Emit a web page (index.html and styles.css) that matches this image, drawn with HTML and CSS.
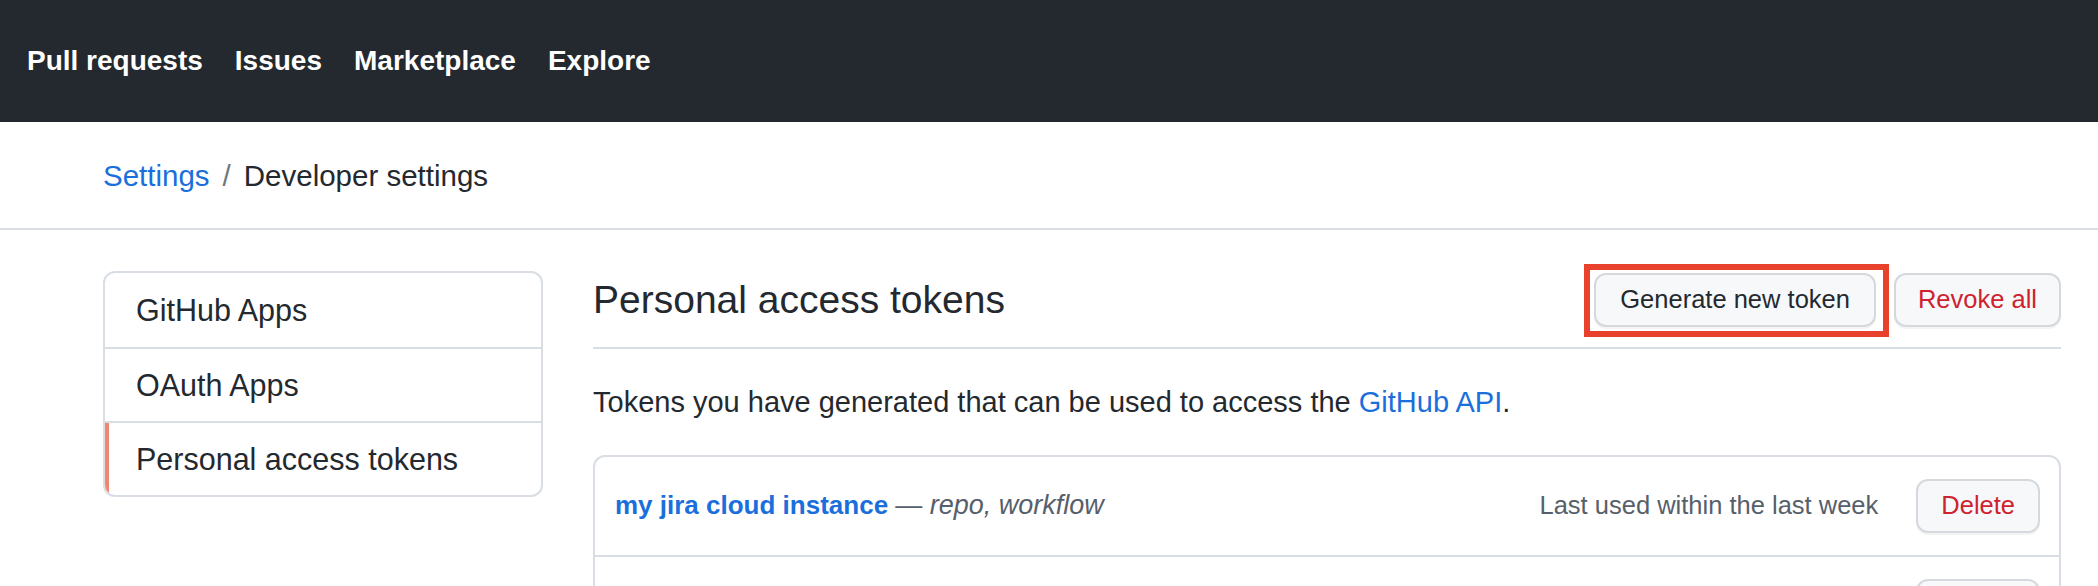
FILE: index.html
```html
<!DOCTYPE html>
<html lang="en">
<head>
<meta charset="utf-8">
<title>Personal access tokens</title>
<link rel="stylesheet" href="styles.css">
</head>
<body>
<header class="topbar">
  <nav class="topnav">
    <a class="topnav-link" href="#">Pull requests</a>
    <a class="topnav-link" href="#">Issues</a>
    <a class="topnav-link" href="#">Marketplace</a>
    <a class="topnav-link" href="#">Explore</a>
  </nav>
</header>

<div class="crumbs">
  <a class="crumb-link" href="#">Settings</a>
  <span class="crumb-sep">/</span>
  <span class="crumb-current">Developer settings</span>
</div>

<main class="layout">
  <aside class="sidebar">
    <nav class="menu">
      <a class="menu-item" href="#">GitHub Apps</a>
      <a class="menu-item" href="#">OAuth Apps</a>
      <a class="menu-item is-selected" href="#">Personal access tokens</a>
    </nav>
  </aside>

  <section class="content">
    <div class="subhead">
      <h2 class="subhead-title">Personal access tokens</h2>
      <div class="subhead-actions">
        <span class="highlight-box"><a class="btn" href="#">Generate new token</a></span>
        <a class="btn btn-danger btn-revoke" href="#">Revoke all</a>
      </div>
    </div>

    <p class="lead">Tokens you have generated that can be used to access the <a class="link" href="#">GitHub API</a>.</p>

    <div class="box">
      <div class="box-row">
        <div class="token-desc">
          <a class="token-name" href="#">my jira cloud instance</a>
          <span class="token-scopes">— <em>repo, workflow</em></span>
        </div>
        <div class="token-meta">
          <span class="token-used">Last used within the last week</span>
          <a class="btn btn-danger btn-row" href="#">Delete</a>
        </div>
      </div>
      <div class="box-row">
        <div class="token-desc"></div>
        <div class="token-meta">
          <a class="btn btn-danger btn-row" href="#">Delete</a>
        </div>
      </div>
    </div>
  </section>
</main>
</body>
</html>
```

FILE: styles.css
```css
* {
  box-sizing: border-box;
}

html, body {
  margin: 0;
  padding: 0;
  background: #ffffff;
}

body {
  font-family: "Liberation Sans", Arial, sans-serif;
  color: #24292f;
  font-size: 28px;
  line-height: 1.4;
}

a {
  text-decoration: none;
}

/* top bar */
.topbar {
  height: 122px;
  background: #24292f;
  display: flex;
  align-items: center;
  padding-left: 27px;
}

.topnav {
  display: flex;
  gap: 32px;
}

.topnav-link {
  color: #ffffff;
  font-weight: 700;
  font-size: 28px;
}

/* breadcrumbs */
.crumbs {
  height: 108px;
  border-bottom: 2px solid #d8dee4;
  display: flex;
  align-items: center;
  padding-left: 103px;
  padding-top: 2px;
  font-size: 29.5px;
}

.crumb-link {
  color: #1a6fdc;
}

.crumb-sep {
  color: #6e7781;
  margin: 0 13px;
}

.crumb-current {
  color: #24292f;
}

/* layout */
.layout {
  display: flex;
  gap: 50px;
  padding: 41px 37px 0 103px;
}

.sidebar {
  width: 440px;
  flex: none;
}

.menu {
  margin: 2px;
  border-radius: 10px;
  box-shadow: 0 0 0 2px #d8dee4;
  overflow: hidden;
  display: flex;
  flex-direction: column;
}

.menu-item {
  height: 74px;
  display: flex;
  align-items: center;
  padding-left: 31px;
  color: #24292f;
  font-size: 30.5px;
}

.menu-item + .menu-item {
  border-top: 2px solid #d8dee4;
}

.menu-item.is-selected {
  box-shadow: inset 4px 0 0 #f0876f;
}

/* content */
.content {
  flex: 1;
  min-width: 0;
}

.subhead {
  display: flex;
  align-items: center;
  justify-content: space-between;
  padding: 2px 0 20px;
  border-bottom: 2px solid #d8dee4;
}

.subhead-title {
  margin: 0;
  font-size: 39px;
  font-weight: 400;
  line-height: 54px;
  color: #24292f;
}

.subhead-actions {
  display: flex;
  align-items: center;
  gap: 5px;
}

.highlight-box {
  display: flex;
  border: 6px solid #e8412c;
  padding: 3px 7px 4px 4px;
  margin: -9px 0 -10px;
}

.btn {
  display: inline-flex;
  align-items: center;
  justify-content: center;
  height: 54px;
  padding: 0 24px;
  border: 2px solid #d5d8dc;
  border-radius: 12px;
  background: #f6f8fa;
  box-shadow: 0 2px 0 rgba(27, 31, 36, 0.05);
  color: #24292f;
  font-size: 25.5px;
  white-space: nowrap;
}

.btn-danger {
  color: #cf222e;
}

.btn-revoke {
  padding: 0 22px;
}

.lead {
  margin: 33px 0;
  font-size: 29px;
  line-height: 40px;
  color: #24292f;
}

.link {
  color: #1a6fdc;
}

/* token list */
.box {
  border: 2px solid #d8dee4;
  border-radius: 12px;
}

.box-row {
  display: flex;
  align-items: center;
  justify-content: space-between;
  padding: 22px 19px 22px 20px;
  font-size: 25.5px;
}

.box-row + .box-row {
  border-top: 2px solid #d8dee4;
}

.token-name {
  color: #1a6fdc;
  font-weight: 700;
  font-size: 26px;
}

.token-scopes {
  color: #57606a;
  font-size: 27px;
}

.token-meta {
  display: flex;
  align-items: center;
  gap: 38px;
}

.token-used {
  color: #57606a;
}

.btn-row {
  padding: 0 23px;
}
```
